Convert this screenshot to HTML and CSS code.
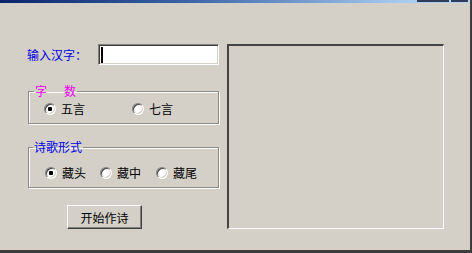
FILE: index.html
```html
<!DOCTYPE html>
<html lang="zh">
<head>
<meta charset="utf-8">
<title>藏头诗</title>
<link rel="stylesheet" href="styles.css">
</head>
<body>
<div class="window">
  <div class="titlebar">
    <span class="cap-btns"><span class="cap cap-wide"></span><span class="cap cap-close"></span></span>
  </div>
  <div class="client">
    <div class="left">
      <div class="input-row">
        <span class="label">输入汉字：</span>
        <div class="textbox"><span class="caret"></span></div>
      </div>
      <fieldset class="group group-count">
        <legend class="legend legend-pink">字<span class="sp"></span>数</legend>
        <label class="opt opt-w1"><input type="radio" name="n" class="radio" checked>五言</label>
        <label class="opt"><input type="radio" name="n" class="radio">七言</label>
      </fieldset>
      <fieldset class="group group-form">
        <legend class="legend legend-blue">诗歌形式</legend>
        <label class="opt opt-w2"><input type="radio" name="f" class="radio" checked>藏头</label>
        <label class="opt opt-w3"><input type="radio" name="f" class="radio">藏中</label>
        <label class="opt"><input type="radio" name="f" class="radio">藏尾</label>
      </fieldset>
      <button class="btn" type="button">开始作诗</button>
    </div>
    <div class="panel"></div>
  </div>
</div>
</body>
</html>
```
FILE: styles.css
```css
* { box-sizing: border-box; }
html, body { margin: 0; padding: 0; }
body {
  width: 472px;
  height: 253px;
  overflow: hidden;
  background: #d4d0c8;
  font-family: "Noto Sans CJK SC", "Noto Sans", sans-serif;
  font-size: 12px;
  color: #000;
}
.window {
  width: 472px;
  height: 253px;
  background: #d4d0c8;
  border-right: 2px solid #3c3c3c;
  border-bottom: 3px solid #3c3c3c;
  display: flex;
  flex-direction: column;
}
.titlebar {
  height: 3px;
  background: linear-gradient(to right, #0a246a 0%, #3a64a8 40%, #a6caf0 85%, #b8d4f0 100%);
  display: flex;
  justify-content: flex-end;
  padding-right: 2px;
}
.cap-btns { display: flex; gap: 2px; }
.cap { height: 2px; background: #2e3c5a; }
.cap-wide { width: 32px; }
.cap-close { width: 17px; }
.client {
  flex: 1;
  display: flex;
  padding-left: 27px;
  gap: 8px;
}
.left {
  width: 192px;
  display: flex;
  flex-direction: column;
  align-items: flex-start;
}
.input-row {
  margin-top: 41px;
  display: flex;
  align-items: center;
  height: 21px;
}
.label {
  width: 71px;
  color: #0000e0;
  line-height: 14px;
  padding-top: 1px;
}
.textbox {
  width: 121px;
  height: 21px;
  background: #fff;
  border: 1px solid;
  border-color: #808080 #ffffff #ffffff #808080;
  box-shadow: inset 1px 1px 0 #404040, inset -1px -1px 0 #d4d0c8;
  display: flex;
  align-items: center;
  padding-left: 2px;
}
.caret {
  width: 2px;
  height: 16px;
  background: #000;
}
.group {
  margin: 0 0 0 1px;
  width: 191px;
  border: 1px solid #8c8a86;
  box-shadow: inset 1px 1px 0 #fff, 1px 1px 0 #fff;
  display: flex;
  align-items: center;
  min-inline-size: 0;
}
.legend {
  padding: 0 1px;
  line-height: 14px;
  height: 14px;
}
.legend-pink { color: #ee00ee; margin-left: -10px; }
.legend-blue { color: #0000e0; margin-left: -12px; }
.sp { display: inline-block; width: 17px; }
.group-count {
  margin-top: 19px;
  padding: 4px 0 7px 15px;
}
.group-form {
  margin-top: 16px;
  padding: 12px 0 7px 16px;
}
.opt {
  display: flex;
  align-items: center;
  height: 14px;
  line-height: 14px;
}
.opt-w1 { width: 88px; }
.opt-w2 { width: 55px; }
.opt-w3 { width: 56px; }
.radio {
  appearance: none;
  -webkit-appearance: none;
  margin: 0 5px 0 0;
  width: 12px;
  height: 12px;
  border-radius: 50%;
  border: 1px solid;
  border-color: #808080 #ffffff #ffffff #808080;
  box-shadow: inset 1px 1px 0 #404040, inset -1px -1px 0 #d4d0c8;
  background: #fff;
  flex: none;
}
.radio:checked {
  background: radial-gradient(circle at 50% 50%, #000 0, #000 2px, #fff 2.5px);
}
.btn {
  margin: 17px 0 0 40px;
  width: 75px;
  height: 24px;
  padding: 0;
  font-family: inherit;
  font-size: 12px;
  color: #000;
  background: #d4d0c8;
  border: 1px solid;
  border-color: #ffffff #404040 #404040 #ffffff;
  box-shadow: inset -1px -1px 0 #808080;
  border-radius: 0;
}
.panel {
  margin-top: 41px;
  width: 217px;
  height: 185px;
  border-style: solid;
  border-width: 2px 1px 1px 2px;
  border-color: #444 #fff #fff #444;
}
```
